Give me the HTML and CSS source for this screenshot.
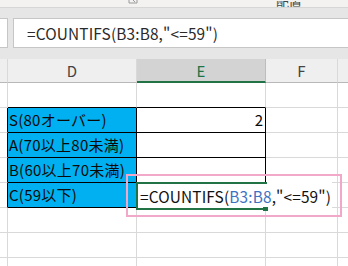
FILE: index.html
```html
<!DOCTYPE html>
<html lang="ja">
<head>
<meta charset="utf-8">
<link rel="stylesheet" href="styles.css">
</head>
<body>
<div class="app">
  <div class="ribbon">
    <span class="rb-icon"><svg width="10" height="8" viewBox="0 0 10 8"><path d="M1 0v4h8V0" fill="none" stroke="#9a9a9a" stroke-width="1"/><path d="M5 1l2 2" stroke="#9a9a9a" stroke-width="1"/></svg></span>
    <span class="rb-text">配置</span>
  </div>
  <div class="band"></div>
  <div class="fbar">
    <div class="namebox"></div>
    <div class="finput">=COUNTIFS(B3:B8,"&lt;=59")</div>
  </div>
  <div class="band band2"></div>
  <div class="sheet">
    <div class="h corner"></div>
    <div class="h">D</div>
    <div class="h hsel">E</div>
    <div class="h">F</div>
    <div class="h hlast"></div>

    <div class="c"></div>
    <div class="c bb"></div>
    <div class="c bb"></div>
    <div class="c"></div>
    <div class="c last"></div>

    <div class="c br"></div>
    <div class="c blue">S(80オーバー)</div>
    <div class="c box num">2</div>
    <div class="c"></div>
    <div class="c last"></div>

    <div class="c br"></div>
    <div class="c blue">A(70以上80未満)</div>
    <div class="c box"></div>
    <div class="c"></div>
    <div class="c last"></div>

    <div class="c br"></div>
    <div class="c blue">B(60以上70未満)</div>
    <div class="c box"></div>
    <div class="c"></div>
    <div class="c last"></div>

    <div class="c br"></div>
    <div class="c blue">C(59以下)</div>
    <div class="c box editing">
      <div class="editor">
        <span class="frame"></span>
        <span class="handle"></span>
        <span class="etext">=COUNTIFS(<span class="ref">B3:B8</span>,"&lt;=59")</span><span class="caret"></span>
      </div>
    </div>
    <div class="c"></div>
    <div class="c last"></div>

    <div class="c"></div>
    <div class="c"></div>
    <div class="c"></div>
    <div class="c"></div>
    <div class="c last"></div>

    <div class="c"></div>
    <div class="c"></div>
    <div class="c"></div>
    <div class="c"></div>
    <div class="c last"></div>

    <div class="c"></div>
    <div class="c"></div>
    <div class="c"></div>
    <div class="c"></div>
    <div class="c last"></div>

    <div class="highlight"></div>
  </div>
</div>
</body>
</html>
```
FILE: styles.css
```css
html, body {
  margin: 0;
  padding: 0;
  background: #ffffff;
}
.app {
  width: 348px;
  height: 266px;
  overflow: hidden;
  font-family: "Noto Sans CJK JP", "Noto Sans", sans-serif;
  color: #222;
}
.ribbon {
  height: 7px;
  background: #f3f2f1;
  border-bottom: 1px solid #d6d6d6;
  box-sizing: content-box;
  display: flex;
  align-items: flex-end;
  overflow: hidden;
  position: relative;
}
.rb-icon {
  margin-left: 128px;
  height: 7px;
  display: flex;
  align-items: flex-end;
}
.rb-icon svg { display: block; }
.rb-text {
  margin-left: 138px;
  font-size: 13px;
  line-height: 13px;
  height: 7px;
  color: #444;
  overflow: hidden;
  display: flex;
  align-items: flex-end;
  margin-bottom: -1px;
}
.band {
  height: 10px;
  background: #e6e6e6;
}
.band2 {
  height: 11px;
}
.fbar {
  height: 30px;
  display: flex;
  gap: 5px;
  background: #e6e6e6;
}
.namebox {
  width: 7px;
  background: #fff;
  border: 1px solid #c6c6c6;
  border-left: none;
}
.finput {
  flex: 1;
  background: #fff;
  border: 1px solid #c6c6c6;
  border-right: none;
  padding-left: 13px;
  font-size: 15.4px;
  letter-spacing: 0.15px;
  line-height: 28px;
  color: #2a2a2a;
  white-space: nowrap;
}
.sheet {
  position: relative;
  display: grid;
  grid-template-columns: 8px 129px 129px 72px 10px;
  grid-template-rows: 24px;
  grid-auto-rows: 25px;
}
.h, .c {
  box-sizing: border-box;
  border-right: 1px solid #d9d9d9;
  border-bottom: 1px solid #d9d9d9;
}
.h {
  background: #efefef;
  border-bottom-color: #b8b8b8;
  font-size: 15px;
  color: #444;
  text-align: center;
  line-height: 23px;
}
.hsel {
  background: #d3d3d3;
  color: #217346;
  border-bottom: 2px solid #217346;
  border-right-color: #bdbdbd;
}
.hlast, .last { border-right: none; }
.c {
  font-size: 15px;
  line-height: 24px;
  white-space: nowrap;
  color: #0a0a0a;
}
.bb { border-bottom-color: #000; }
.br { border-right-color: #000; }
.blue {
  background: #00b0f0;
  border-right-color: #000;
  border-bottom-color: #000;
  padding-left: 1px;
  letter-spacing: 0.25px;
}
.box {
  border-right-color: #000;
  border-bottom-color: #000;
}
.num {
  text-align: right;
  padding-right: 2px;
}
.editing {
  position: relative;
}
.editor {
  position: absolute;
  left: -1px;
  top: -1px;
  width: 196px;
  height: 28px;
  background: #fff;
  z-index: 2;
  display: flex;
  align-items: center;
  padding-left: 4px;
  box-sizing: border-box;
}
.frame {
  position: absolute;
  left: 0;
  top: 0;
  width: 131px;
  height: 28px;
  box-sizing: border-box;
  border: 2px solid #217346;
  border-right: none;
}
.handle {
  position: absolute;
  left: 127px;
  top: 25px;
  width: 5px;
  height: 4px;
  background: #217346;
}
.etext {
  font-size: 15.4px;
  letter-spacing: 0.15px;
  color: #111;
  position: relative;
}
.ref { color: #3d72c2; }
.caret {
  width: 1px;
  height: 15px;
  background: #000;
  margin-left: 3px;
  position: relative;
}
.highlight {
  position: absolute;
  left: 126px;
  top: 115px;
  width: 216px;
  height: 43px;
  box-sizing: border-box;
  border: 2px solid #f2a8c8;
  z-index: 3;
}
```
